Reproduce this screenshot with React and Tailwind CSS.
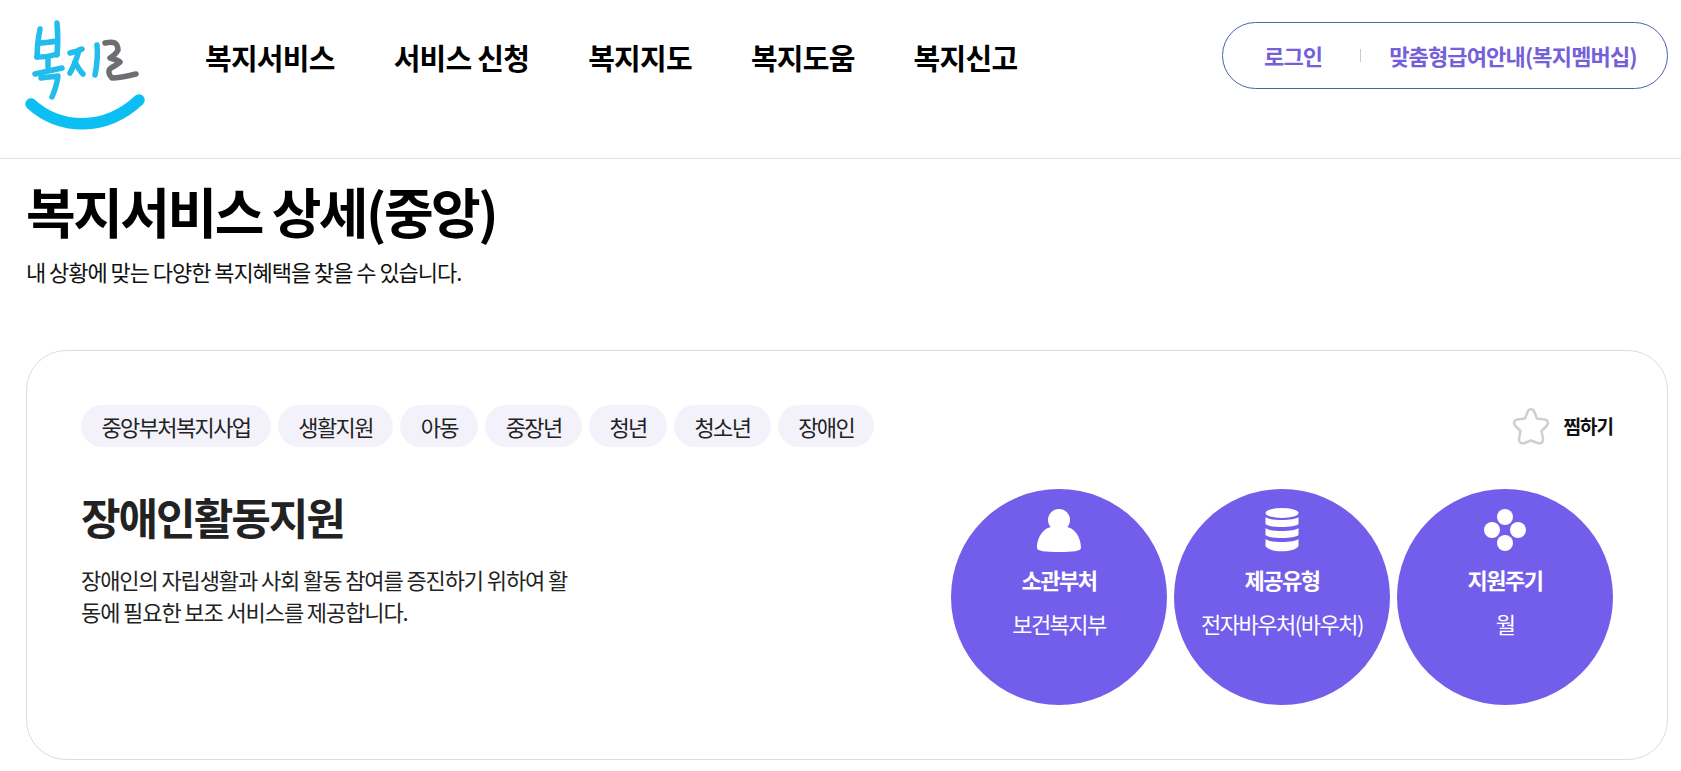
import React from 'react';

const navItems = ['복지서비스', '서비스 신청', '복지지도', '복지도움', '복지신고'];
const tags = ['중앙부처복지사업', '생활지원', '아동', '중장년', '청년', '청소년', '장애인'];

const Logo = () => (
  <svg width="150" height="140" viewBox="0 0 150 140" fill="none" strokeLinecap="round" strokeLinejoin="round">
    <g stroke="#22bdec" strokeWidth="5.5">
      <path d="M40 29 C38 38 37 48 37 57" />
      <path d="M57 23 C58 34 58 45 57 55" />
      <path d="M39 43 C45 43 51 42 57 41" />
      <path d="M37 57 C44 57 51 56 57 54" />
      <path d="M48 57 L48 67" />
      <path d="M35 74 C44 72 53 70 62 68" />
      <path d="M41 78 C47 77 53 77 58 76 C57 84 55 90 52 97" />
      <path d="M70 53 C74 52 78 51 82 49" />
      <path d="M79 50 C77 58 74 66 70 73" />
      <path d="M75 62 C77 66 80 71 83 74" />
      <path d="M97 45 C98 55 97 65 95 75" />
    </g>
    <path
      d="M105 43 C109 42 113 42 115 43 C118 45 118 48 118 50 C116 54 113 56 110 58 C114 59 118 60 120 62 C117 65 114 66 111 68 C108 70 108 74 112 78 C120 78 128 76 136 74"
      stroke="#6d6e72"
      strokeWidth="5.5"
    />
    <path d="M31 104 C60 130 105 132 139 100" stroke="#0cbff2" strokeWidth="11.5" />
  </svg>
);

const PersonIcon = () => (
  <svg width="44" height="44" viewBox="0 0 44 44" fill="white">
    <circle cx="22" cy="12" r="11" />
    <path d="M0 40 C0 28 8 19 15 19 C19 23 25 23 29 19 C36 19 44 28 44 40 C44 43 36 44 22 44 C8 44 0 43 0 40 Z" />
  </svg>
);

const DatabaseIcon = () => (
  <svg width="34" height="44" viewBox="0 0 34 44" fill="white">
    <ellipse cx="17" cy="5" rx="16.5" ry="5" />
    <path d="M0.5 9 C4 13 30 13 33.5 9 V16 C30 20 4 20 0.5 16 Z" />
    <path d="M0.5 20 C4 24 30 24 33.5 20 V27 C30 31 4 31 0.5 27 Z" />
    <path d="M0.5 31 C4 35 30 35 33.5 31 V38 C30 45 4 45 0.5 38 Z" />
  </svg>
);

const DotsIcon = () => (
  <svg width="44" height="44" viewBox="0 0 44 44" fill="white">
    <circle cx="22" cy="9" r="8" />
    <circle cx="9" cy="22" r="8" />
    <circle cx="35" cy="22" r="8" />
    <circle cx="22" cy="35" r="8" />
  </svg>
);

const StarIcon = () => (
  <svg width="38" height="38" viewBox="0 0 38 38" fill="none" stroke="#cfcfcf" strokeWidth="2.5" strokeLinejoin="round">
    <path d="M16 4 C17.5 1.5 20.5 1.5 22 4 L25 11.5 L32.5 12.5 C36 13 37 16.5 34.5 19 L29.5 24 L31 32 C31.5 35.5 28.5 37 25.5 36 L19 33.5 L12.5 36 C9.5 37 6.5 35.5 7 32 L8.5 24 L3.5 19 C1 16.5 2 13 5.5 12.5 L13 11.5 Z" />
  </svg>
);

const infoCircles = [
  { title: '소관부처', value: '보건복지부', Icon: PersonIcon },
  { title: '제공유형', value: '전자바우처(바우처)', Icon: DatabaseIcon },
  { title: '지원주기', value: '월', Icon: DotsIcon },
];

export default function App() {
  return (
    <div className="min-h-[771px] bg-white text-black font-['Noto_Sans_CJK_KR','Noto_Sans',sans-serif] overflow-hidden">
      {/* Header */}
      <header className="h-[159px] border-b border-[#e2e2e2] flex items-start pr-[13px]">
        <div className="w-[205px] shrink-0">
          <Logo />
        </div>
        <nav className="flex gap-[59px] pt-[37px]">
          {navItems.map((item) => (
            <a key={item} className="text-[29px] leading-[40px] font-bold tracking-[-0.75px] whitespace-nowrap">
              {item}
            </a>
          ))}
        </nav>
        <div className="ml-auto mt-[22px] w-[446px] h-[67px] rounded-full border border-[#4a62ad] flex items-center pl-[41px] text-[#7460d8] text-[22px] font-bold tracking-[-0.85px]">
          <a>로그인</a>
          <span className="w-px h-[13px] bg-[#c8c8d8] ml-[38px] mr-[28px]" />
          <a className="whitespace-nowrap">맞춤형급여안내(복지멤버십)</a>
        </div>
      </header>

      <main className="pl-[26px] pr-[13px]">
        <h1 className="text-[54px] leading-[60px] font-bold tracking-[-2.5px] mt-[22px] whitespace-nowrap">복지서비스 상세(중앙)</h1>
        <p className="text-[22px] leading-[30px] tracking-[-1.05px] mt-[15px] mb-[64px] text-[#111]">
          내 상황에 맞는 다양한 복지혜택을 찾을 수 있습니다.
        </p>

        {/* Detail card */}
        <section className="h-[410px] rounded-[40px] border border-[#dcdcdc] px-[54px] pt-[54px]">
          <div className="flex items-center justify-between">
            <ul className="flex gap-[7px]">
              {tags.map((tag) => (
                <li
                  key={tag}
                  className="h-[42px] px-[20.4px] flex items-center rounded-full bg-[#f3f2fa] text-[22px] tracking-[-1.6px] text-[#222] whitespace-nowrap"
                >
                  {tag}
                </li>
              ))}
            </ul>
            <button className="flex items-center gap-[14px] text-[19px] font-bold tracking-[-1px] text-[#111]">
              <StarIcon />
              찜하기
            </button>
          </div>

          <div className="flex justify-between mt-[42px]">
            <div className="w-[495px]">
              <h2 className="text-[43px] leading-[54px] font-bold tracking-[-2px] text-[#222]">장애인활동지원</h2>
              <p className="text-[22px] leading-[32px] tracking-[-1.1px] mt-[20px] text-[#222]">
                장애인의 자립생활과 사회 활동 참여를 증진하기 위하여 활동에 필요한 보조 서비스를 제공합니다.
              </p>
            </div>
            <div className="flex gap-[7px]">
              {infoCircles.map(({ title, value, Icon }) => (
                <div
                  key={title}
                  className="w-[216px] h-[216px] rounded-full bg-[#735deb] text-white flex flex-col items-center pt-[19px]"
                >
                  <Icon />
                  <strong className="text-[22px] leading-[30px] font-bold tracking-[-1.5px] mt-[12px]">{title}</strong>
                  <span className="text-[22px] leading-[30px] tracking-[-1.5px] mt-[14px] whitespace-nowrap">{value}</span>
                </div>
              ))}
            </div>
          </div>
        </section>
      </main>
    </div>
  );
}
